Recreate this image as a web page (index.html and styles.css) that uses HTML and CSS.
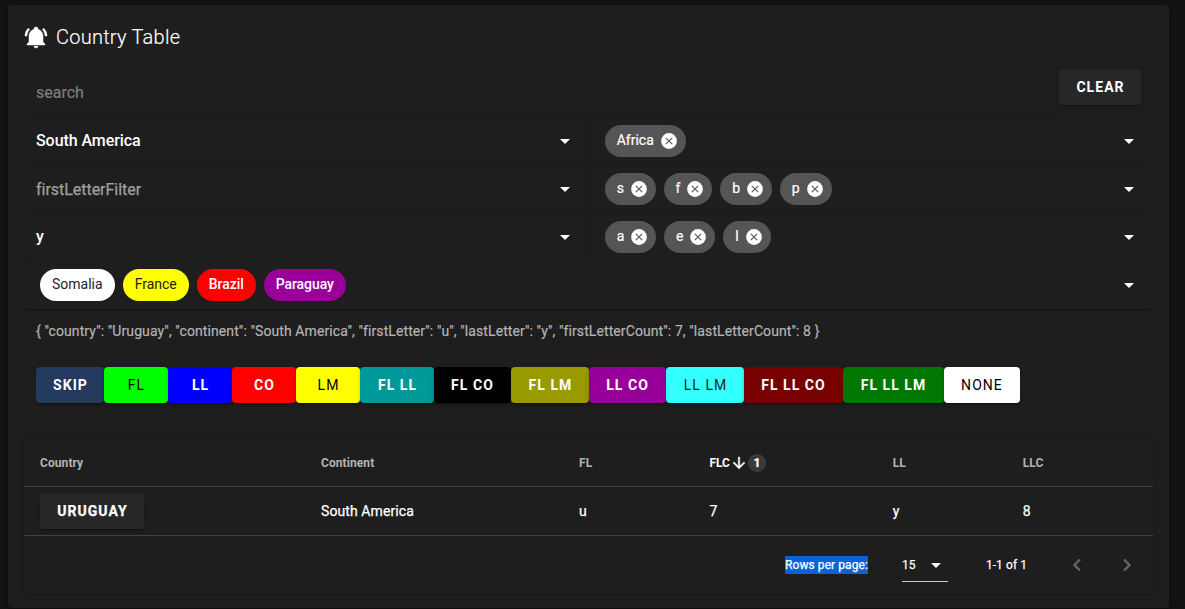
FILE: index.html
```html
<!DOCTYPE html>
<html lang="en">
<head>
<meta charset="utf-8">
<title>Country Table</title>
<link rel="stylesheet" href="styles.css">
</head>
<body>
<svg class="defs" width="0" height="0">
  <symbol id="close" viewBox="0 0 18 18"><circle cx="9" cy="9" r="7.9" fill="currentColor"/><path d="M5.8 5.8L12.2 12.2M12.2 5.8L5.8 12.2" fill="none" stroke="#555" stroke-width="1.15"/></symbol>
  <symbol id="down" viewBox="0 0 24 24"><path fill="currentColor" d="M7,10L12,15L17,10H7Z"/></symbol>
</svg>
<main class="card">
  <header class="title">
    <svg class="bell" viewBox="0 0 24 24"><path fill="currentColor" stroke="currentColor" stroke-width=".5" d="M21,19V20H3V19L5,17V11C5,7.9 7.03,5.17 10,4.29C10,4.19 10,4.1 10,4A2,2 0 0,1 12,2A2,2 0 0,1 14,4C14,4.1 14,4.19 14,4.29C16.97,5.17 19,7.9 19,11V17L21,19M14,21A2,2 0 0,1 12,23A2,2 0 0,1 10,21M19.75,3.19L18.33,4.61C20.04,6.3 21,8.6 21,11H23C23,8.07 21.84,5.25 19.75,3.19M1,11H3C3,8.6 3.96,6.3 5.67,4.61L4.25,3.19C2.16,5.25 1,8.07 1,11Z"/></svg>
    <span>Country Table</span>
  </header>

  <section class="filters">
    <div class="searchrow">
      <div class="field hint search">search</div>
      <button class="btn clear">CLEAR</button>
    </div>
    <div class="row">
      <div class="field"><span>South America</span><svg class="arrow"><use href="#down"/></svg></div>
      <div class="field chips">
        <span class="chip">Africa<svg><use href="#close"/></svg></span>
        <svg class="arrow"><use href="#down"/></svg>
      </div>
    </div>
    <div class="row">
      <div class="field"><span class="dim">firstLetterFilter</span><svg class="arrow"><use href="#down"/></svg></div>
      <div class="field chips">
        <span class="chip">s<svg><use href="#close"/></svg></span>
        <span class="chip">f<svg><use href="#close"/></svg></span>
        <span class="chip">b<svg><use href="#close"/></svg></span>
        <span class="chip">p<svg><use href="#close"/></svg></span>
        <svg class="arrow"><use href="#down"/></svg>
      </div>
    </div>
    <div class="row">
      <div class="field"><span>y</span><svg class="arrow"><use href="#down"/></svg></div>
      <div class="field chips">
        <span class="chip">a<svg><use href="#close"/></svg></span>
        <span class="chip">e<svg><use href="#close"/></svg></span>
        <span class="chip">l<svg><use href="#close"/></svg></span>
        <svg class="arrow"><use href="#down"/></svg>
      </div>
    </div>
    <div class="row last">
      <div class="field chips">
        <span class="chip white">Somalia</span>
        <span class="chip yellow">France</span>
        <span class="chip red">Brazil</span>
        <span class="chip purple">Paraguay</span>
        <svg class="arrow"><use href="#down"/></svg>
      </div>
    </div>
  </section>

  <p class="json">{ "country": "Uruguay", "continent": "South America", "firstLetter": "u", "lastLetter": "y", "firstLetterCount": 7, "lastLetterCount": 8 }</p>

  <nav class="modes">
    <button class="btn skip">SKIP</button>
    <button class="btn w64 lime">FL</button>
    <button class="btn w64 blue">LL</button>
    <button class="btn w64 red">CO</button>
    <button class="btn w64 yellow">LM</button>
    <button class="btn w74 teal">FL LL</button>
    <button class="btn w77 black">FL CO</button>
    <button class="btn w78 olive">FL LM</button>
    <button class="btn w77 purple">LL CO</button>
    <button class="btn w78 cyan">LL LM</button>
    <button class="btn w99 maroon">FL LL CO</button>
    <button class="btn w101 green">FL LL LM</button>
    <button class="btn w76 white">NONE</button>
  </nav>

  <section class="table">
    <div class="tr th">
      <span>Country</span><span>Continent</span><span>FL</span>
      <span class="sorted">FLC<svg viewBox="0 0 24 24"><path fill="currentColor" stroke="currentColor" stroke-width=".6" d="M11,4H13V16L18.5,10.5L19.92,11.92L12,19.84L4.08,11.92L5.5,10.5L11,16V4Z"/></svg><b class="badge">1</b></span>
      <span>LL</span><span>LLC</span>
    </div>
    <div class="tr">
      <span><button class="btn country">URUGUAY</button></span><span>South America</span><span>u</span><span>7</span><span>y</span><span>8</span>
    </div>
    <footer class="foot">
      <span class="selected">Rows per page:</span>
      <div class="size"><span>15</span><svg class="arrow"><use href="#down"/></svg></div>
      <span class="range">1-1 of 1</span>
      <svg class="page" viewBox="0 0 24 24"><path fill="currentColor" stroke="currentColor" stroke-width=".5" d="M15.41,16.58L10.83,12L15.41,7.41L14,6L8,12L14,18L15.41,16.58Z"/></svg>
      <svg class="page" viewBox="0 0 24 24"><path fill="currentColor" stroke="currentColor" stroke-width=".5" d="M8.59,16.58L13.17,12L8.59,7.41L10,6L16,12L10,18L8.59,16.58Z"/></svg>
    </footer>
  </section>
</main>
</body>
</html>
```

FILE: styles.css
```css
* { box-sizing: border-box; }
body { margin: 0; padding: 5px 16px 0 8px; height: 609px; overflow: hidden; background: #121212; color: #fff; font: 400 16px/20px Roboto, sans-serif; }
.defs { display: block; height: 0; }
svg { flex: none; }
.card { height: 603px; padding: 16px 16px 0; border-radius: 4px; background: #1e1e1e; box-shadow: 0 2px 2px rgba(0,0,0,.14), 0 1px 5px rgba(0,0,0,.12); }
.title { display: flex; align-items: center; gap: 8px; height: 32px; margin-bottom: 16px; font-size: 20px; font-weight: 300; letter-spacing: .25px; -webkit-text-stroke: .15px; }
.bell { width: 24px; height: 24px; }

.searchrow, .row, .chips, .modes, .foot, .sorted { display: flex; align-items: center; }
.searchrow { align-items: flex-start; padding-right: 12px; }
.row { height: 48px; }
.field { flex: 1; display: flex; align-items: center; height: 48px; padding: 0 12px; border-radius: 4px; box-shadow: 0 0 2px rgba(0,0,0,.09); letter-spacing: -.07px; font-weight: 500; }
.last .field { box-shadow: 0 3px 1px -2px rgba(0,0,0,.3), 0 1px 2px rgba(0,0,0,.14); }
.row .field:first-child:not(:last-child) { flex: 0 0 565px; padding-right: 12.5px; }
.row .field.chips { gap: 8px; padding-left: 16px; }
.row .field.chips:first-child { padding-right: 12px; }
.hint { color: #7e7e7e; font-weight: 400; letter-spacing: 0; -webkit-text-stroke: .2px; }
.dim { padding-top: 2px; color: #a0a0a0; font-weight: 400; letter-spacing: -.03px; -webkit-text-stroke: .25px; }
.arrow { width: 24px; height: 24px; margin-left: auto; }
.chip { display: flex; align-items: center; height: 32px; padding: 0 12px 2px 11.7px; border-radius: 16px; background: #555; font-size: 14px; font-weight: 400; letter-spacing: 0; -webkit-text-stroke: .2px; }
.chip svg { width: 18px; height: 18px; margin: 2px -4px 0 6px; }

.btn { display: flex; justify-content: center; align-items: center; flex: none; height: 36px; padding: 0 0 0 1px; border: 0; border-radius: 4px; background: #272727; color: #fff; font: 700 14px/20px Roboto, sans-serif; letter-spacing: 1.05px; box-shadow: 0 3px 1px -2px rgba(0,0,0,.2), 0 2px 2px rgba(0,0,0,.14), 0 1px 5px rgba(0,0,0,.12); }
.clear { width: 82px; }
.country { width: 104px; }
.skip { width: 68px; background: #243a5e; }
.w64 { width: 64px; }
.w74 { width: 74px; }
.w76 { width: 76px; }
.w77 { width: 77px; }
.w78 { width: 78px; }
.w99 { width: 99px; }
.w101 { width: 101px; }
.w77, .w99, .w101, .w76 { padding: 0; }
.lime { background: #0f0; }
.blue { background: #00f; }
.red { background: #f00; }
.yellow { background: #ff0; }
.teal { background: #099; }
.black { background: #000; }
.olive { background: #990; }
.purple { background: #909; }
.cyan { background: #3ff; }
.maroon { background: #700; }
.green { background: #070; }
.white { background: #fff; }
.lime, .yellow, .cyan, .white { color: #1e1e1e; font-weight: 400; -webkit-text-stroke: 0; }
.btn.white, .btn.lime, .btn.yellow { color: #000; }
.chip.white, .chip.yellow { padding-left: 12px; }
.chip.red, .chip.purple { padding-left: 12px; font-weight: 500; letter-spacing: -.06px; -webkit-text-stroke: 0; }

.json { margin: 12px 12px 0; height: 20px; color: #b3b3b3; font-size: 14px; letter-spacing: .092px; white-space: nowrap; -webkit-text-stroke: .2px; }
.modes { margin: 26px 12px 0; }

.table { margin-top: 36px; height: 155px; border-radius: 4px; box-shadow: 0 3px 1px -2px rgba(0,0,0,.2), 0 1px 5px rgba(0,0,0,.12); font-size: 14px; letter-spacing: .09px; -webkit-text-stroke: .25px; }
.tr { display: grid; grid-template-columns: 281px 258px 130.4px 183.4px 130px 146px; align-items: center; height: 49px; padding-left: 16px; border-bottom: 1px solid #404040; }
.th { height: 48px; color: #b3b3b3; font-size: 12px; font-weight: 700; letter-spacing: .08px; -webkit-text-stroke: 0; }
.sorted { color: #fff; letter-spacing: 0; }
.sorted svg { width: 18px; height: 18px; }
.badge { width: 18px; height: 18px; border-radius: 9px; background: #3a3a3a; text-align: center; line-height: 18px; }
.foot { height: 58px; padding-right: 14px; justify-content: flex-end; font-size: 12px; letter-spacing: .07px; }
.selected { line-height: 18px; background: #0a63d6; }
.size { display: flex; align-items: center; width: 46px; height: 34px; margin: 0 38px 0 34px; border-bottom: 1px solid #c7c7c7; }
.range { margin-right: 38px; }
.page { width: 24px; height: 24px; color: #646464; }
.page + .page { margin-left: 26px; }
```
